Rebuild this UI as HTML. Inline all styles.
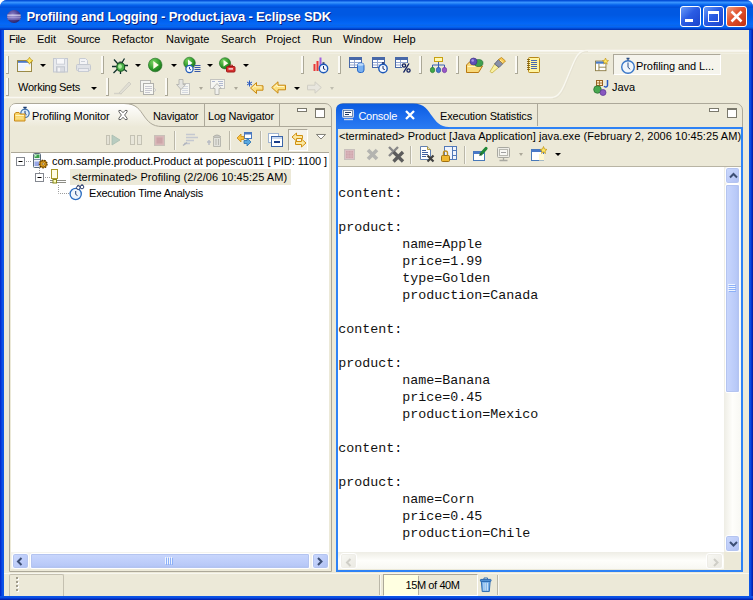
<!DOCTYPE html>
<html><head><meta charset="utf-8"><title>Profiling and Logging - Product.java - Eclipse SDK</title>
<style>
*{box-sizing:border-box;margin:0;padding:0}
html,body{width:753px;height:600px;overflow:hidden;background:#fff}
body{font-family:"Liberation Sans",sans-serif;font-size:11px;color:#000;position:relative}
.a{position:absolute}
svg{position:absolute;overflow:visible}
#win{position:absolute;left:0;top:0;width:753px;height:600px;background:linear-gradient(90deg,#0022C4 0,#0740DF 1.5px,#0C58EA 3px,#0A52E4 4px,#0A52E4 749px,#0C58EA 750px,#0536CE 751.5px,#001C9E 753px);border-radius:7px 7px 0 0;overflow:hidden}
#botb{position:absolute;left:0;top:596px;width:753px;height:4px;background:linear-gradient(#0A52E4,#0C56E8 30%,#0536CE 65%,#001C9E)}
#title{position:absolute;left:0;top:0;width:753px;height:30px;
 background:linear-gradient(#0046D2 0,#0A5AE0 1px,#3C96FF 2.200px,#2A88F8 3.200px,#0A66EE 4.800px,#0058E6 6px,#0050D8 7.500px,#0058E2 8.500px,#0058E2 15px,#0060EE 20px,#0468F8 24px,#0A66E8 25.300px,#0466F6 26.500px,#0458E0 28px,#0038C0 29.200px,#0030B0 30px)}
#ttext{position:absolute;left:26.500px;top:9.400px;color:#fff;font-weight:bold;font-size:13px;letter-spacing:-0.15px;text-shadow:1px 1px 0 #0A1F80;white-space:nowrap}
#client{position:absolute;left:4px;top:30px;width:745px;height:566px;background:#ECE9D8}
.t{position:absolute;white-space:nowrap;line-height:13px}
.grip{position:absolute;width:3px;height:18px;border-right:1px solid #ABA897;border-bottom:1px solid #ABA897;background:#FBFAF5}
.sep{position:absolute;width:2px;height:18px;border-left:1px solid #BAB7A8;border-right:1px solid #F8F7F1}
.dd{position:absolute;width:0;height:0;border-left:3px solid transparent;border-right:3px solid transparent;border-top:3px solid #000}
.dd.dis{border-top-color:#ACA899}
.wb{position:absolute;top:6px;width:21px;height:21px;border:1px solid #fff;border-radius:3px}
.sbb{width:17px;height:17px;border:1px solid #fff;border-radius:3px;background:linear-gradient(135deg,#CBD9FD,#BCCBF8 60%,#ADBEF2);box-shadow:0 0 0 1px #B4C4F0 inset}
.sbd{width:17px;height:17px;border:1px solid #fff;border-radius:3px;background:linear-gradient(135deg,#F8F8F4,#F0EFE9 60%,#EAE9E2);box-shadow:0 0 0 1px #EEEDE7 inset}
.mono{font-family:"Liberation Mono",monospace;font-size:13.33px;white-space:pre;position:absolute;left:338.300px;line-height:20px;height:17px;color:#111}
</style></head><body>
<div id="win">
<div id="title">
 <svg style="left:7px;top:10px" width="14" height="13" viewBox="0 0 14 13"><defs><radialGradient id="eg" cx="0.4" cy="0.35" r="0.7"><stop offset="0" stop-color="#8A80C8"/><stop offset="0.6" stop-color="#4A3F90"/><stop offset="1" stop-color="#2A2060"/></radialGradient></defs><ellipse cx="7" cy="6.5" rx="7" ry="6.5" fill="url(#eg)"/><rect x="0.3" y="4.6" width="13.4" height="1.1" fill="#E8E4F8"/><rect x="0.2" y="6.6" width="13.6" height="1" fill="#C8C0F0"/><rect x="0.6" y="8.5" width="12.8" height="0.9" fill="#A8A0E0"/></svg>
 <div id="ttext">Profiling and Logging - Product.java - Eclipse SDK</div>
 <div class="wb" style="left:680px;background:linear-gradient(135deg,#6A9CF8,#2A5CE4 45%,#1A44CC)"><div class="a" style="left:4px;top:12px;width:8px;height:3px;background:#fff"></div></div>
 <div class="wb" style="left:703px;background:linear-gradient(135deg,#6A9CF8,#2A5CE4 45%,#1A44CC)"><div class="a" style="left:4px;top:4px;width:11px;height:11px;border:1px solid #fff;border-top:3px solid #fff"></div></div>
 <div class="wb" style="left:726px;background:linear-gradient(135deg,#F0A080,#E0502C 45%,#C03010)"><svg style="left:0;top:0" width="19" height="19"><path d="M4.500 4.500L14.500 14.500M14.500 4.500L4.500 14.500" stroke="#fff" stroke-width="2.500"/></svg></div>
</div>
<div id="client"></div>
<div id="botb"></div>
</div>

<!-- ===== MENU BAR ===== -->
<div id="menubar">
 <div class="t" style="left:9px;top:33px;letter-spacing:-0.300px">File</div>
 <div class="t" style="left:37px;top:33px">Edit</div>
 <div class="t" style="left:67px;top:33px;letter-spacing:-0.300px">Source</div>
 <div class="t" style="left:112px;top:33px">Refactor</div>
 <div class="t" style="left:166px;top:33px">Navigate</div>
 <div class="t" style="left:221px;top:33px">Search</div>
 <div class="t" style="left:266px;top:33px">Project</div>
 <div class="t" style="left:312px;top:33px">Run</div>
 <div class="t" style="left:343px;top:33px">Window</div>
 <div class="t" style="left:393px;top:33px">Help</div>
 <div class="a" style="left:4px;top:50px;width:745px;height:1px;background:#FCFBF7"></div>
 <div class="a" style="left:4px;top:51px;width:745px;height:1px;background:#F5F3EA"></div>
 <div class="a" style="left:4px;top:53px;width:745px;height:1px;background:#F1EFE2"></div>
</div>

<!-- ===== TOOLBAR ===== -->
<div id="toolbar">
 <!-- row 1 -->
 <div class="grip" style="left:6px;top:56px"></div>
 <!-- new -->
 <svg style="left:16.500px;top:56.500px" width="16" height="16" viewBox="0 0 16 16"><rect x="0.500" y="3.500" width="14" height="11" fill="#fff" stroke="#9A8A48"/><rect x="1" y="4" width="13" height="1.800" fill="#4A78C8"/><path d="M1,6.500h13v7.500h-13z" fill="#EEF4FE"/><path d="M8,9.500h6v4.500h-6z" fill="#FFF8D8"/><path d="M12.500,0.300l1.300,2.200l2.200,1.200l-2.200,1.300l-1.300,2.200l-1.300,-2.200l-2.200,-1.300l2.200,-1.200z" fill="#FFE860" stroke="#B89010" stroke-width="0.700"/></svg>
 <div class="dd" style="left:40px;top:64px"></div>
 <!-- save (disabled) -->
 <svg style="left:53px;top:57.500px" width="16" height="15.500" viewBox="0 0 16 15" preserveAspectRatio="none"><rect x="0.500" y="0.500" width="14" height="13" fill="#E8EAEE" stroke="#C4C8D0"/><rect x="3.500" y="0.500" width="8" height="5.500" fill="#F8F8FA" stroke="#CCD0D8"/><rect x="3.500" y="8.500" width="8" height="5" fill="#DADCE2" stroke="#C4C8D0"/><rect x="5" y="9.500" width="2" height="3.500" fill="#F4F4F6"/></svg>
 <!-- print (disabled) -->
 <svg style="left:76px;top:58px" width="16" height="15" viewBox="0 0 16 15"><path d="M3.500,0.500h6l2,2v4h-8z" fill="#F4F4F6" stroke="#C8CCD4"/><rect x="0.500" y="6.500" width="14" height="6" rx="1" fill="#E0E2E6" stroke="#C4C8D0"/><rect x="2.500" y="10.500" width="10" height="3" fill="#ECECF0" stroke="#C8CCD4"/><path d="M5,3.500h4" stroke="#CCD0D8"/></svg>
 <div class="grip" style="left:101px;top:56px"></div>
 <!-- debug (bug) -->
 <svg style="left:112px;top:57.500px" width="16" height="16" viewBox="0 0 16 16"><path d="M2,1.500l4,4.500M12.500,0.500l-3,5M0,8.500h4.500M1.500,15l4,-4M8.500,16v-3.500M15,13.500l-3.500,-2.500M16,7.500h-4" stroke="#10302C" stroke-width="1.300" fill="none"/><ellipse cx="8.700" cy="9" rx="4" ry="4.300" fill="#48B048" stroke="#185820" stroke-width="1.100"/><ellipse cx="8" cy="8.500" rx="1.900" ry="2.200" fill="#B0ECA0"/><path d="M6,4.800a2.700,2.200 0 0 1 5,0z" fill="#203830"/></svg>
 <div class="dd" style="left:135px;top:64px"></div>
 <!-- run -->
 <svg style="left:148px;top:58px" width="15" height="15" viewBox="0 0 15 15"><defs><radialGradient id="rg" cx="0.350" cy="0.300" r="0.800"><stop offset="0" stop-color="#78D060"/><stop offset="0.600" stop-color="#2E9A2A"/><stop offset="1" stop-color="#1A6A1C"/></radialGradient></defs><circle cx="7.200" cy="7" r="6.800" fill="url(#rg)" stroke="#1C6A20" stroke-width="0.600"/><path d="M5.300,3L10.800,7L5.300,11z" fill="#FFFCE8"/></svg>
 <div class="dd" style="left:171px;top:64px"></div>
 <!-- profile -->
 <svg style="left:183px;top:57px" width="18" height="17" viewBox="0 0 18 17"><circle cx="6.500" cy="6" r="5.800" fill="url(#rg)" stroke="#1C6A20" stroke-width="0.600"/><path d="M5,2.500L9.500,6L5,9.500z" fill="#fff"/><circle cx="6.500" cy="12" r="3.600" fill="#F4F8FF" stroke="#1C58B8" stroke-width="1.200"/><path d="M6.500,10v2l1.500,1" stroke="#1C3C88" fill="none" stroke-width="0.900"/><path d="M11.500,8.500h6M11.500,10.500h6M11.500,12.500h6M11.500,14.500h6" stroke="#3858A8" stroke-width="1"/></svg>
 <div class="dd" style="left:207px;top:64px"></div>
 <!-- external tools -->
 <svg style="left:219px;top:57px" width="17" height="17" viewBox="0 0 17 17"><circle cx="6" cy="6.300" r="5.600" fill="url(#rg)" stroke="#1C6A20" stroke-width="0.600"/><path d="M4.500,3L9.300,6.300L4.500,9.600z" fill="#FFFCE8"/><rect x="7.500" y="9.500" width="8.500" height="5.500" rx="1" fill="#D83030" stroke="#A01818"/><path d="M10,9.500v-1.300h3.500v1.300" fill="none" stroke="#A01818"/><rect x="9.500" y="11.300" width="4.500" height="1.200" fill="#fff"/></svg>
 <div class="dd" style="left:243px;top:64px"></div>
 <div class="grip" style="left:301px;top:56px"></div>
 <!-- bars + clock -->
 <svg style="left:313px;top:57px" width="16" height="17" viewBox="0 0 16 17"><rect x="0.500" y="7" width="2" height="7" fill="#E83838"/><rect x="3.500" y="4" width="2" height="10" fill="#E83838"/><rect x="6.500" y="0.500" width="2" height="13" fill="#A060E0"/><circle cx="10.500" cy="11.500" r="4.200" fill="#F4F8FF" stroke="#1C58B8" stroke-width="1.400"/><path d="M10.500,9v2.800l1.800,0.800" stroke="#102868" fill="none"/><path d="M9.500,6h2" stroke="#102868" stroke-width="1.400"/></svg>
 <div class="grip" style="left:338px;top:56px"></div>
 <!-- table + cylinder -->
 <svg style="left:349px;top:57px" width="16" height="17" viewBox="0 0 16 17"><rect x="0.500" y="0.500" width="12" height="10" fill="#fff" stroke="#4868A8"/><rect x="0.500" y="0.500" width="12" height="2.500" fill="#4868A8"/><path d="M1,5.500h11M1,8h11M5.500,3v7" stroke="#90A4D0"/><rect x="8.500" y="6" width="6.500" height="9.500" rx="2.500" fill="#78B0F0" stroke="#2868C8"/><ellipse cx="11.750" cy="7.500" rx="3" ry="1.300" fill="#C0DCFC"/></svg>
 <!-- table + clock -->
 <svg style="left:372px;top:57px" width="16" height="17" viewBox="0 0 16 17"><rect x="0.500" y="0.500" width="12" height="10" fill="#fff" stroke="#4868A8"/><rect x="0.500" y="0.500" width="12" height="2.500" fill="#4868A8"/><path d="M1,5.500h11M1,8h11M5.500,3v7" stroke="#90A4D0"/><circle cx="11" cy="11.500" r="4.200" fill="#F4F8FF" stroke="#1C58B8" stroke-width="1.400"/><path d="M11,9v2.800l1.800,0.800" stroke="#102868" fill="none"/><path d="M10,6h2" stroke="#102868" stroke-width="1.400"/></svg>
 <!-- table + % -->
 <svg style="left:395px;top:57px" width="16" height="17" viewBox="0 0 16 17"><rect x="0.500" y="0.500" width="12" height="10" fill="#fff" stroke="#4868A8"/><rect x="0.500" y="0.500" width="12" height="2.500" fill="#4868A8"/><path d="M1,5.500h11M1,8h11M5.500,3v7" stroke="#90A4D0"/><rect x="7" y="6" width="9" height="10" fill="#ECE9D8"/><circle cx="9" cy="8.500" r="1.600" fill="none" stroke="#102060" stroke-width="1.300"/><circle cx="13.500" cy="13.500" r="1.600" fill="none" stroke="#102060" stroke-width="1.300"/><path d="M14,6.500L8.500,15.500" stroke="#102060" stroke-width="1.400"/></svg>
 <div class="grip" style="left:419px;top:56px"></div>
 <!-- hierarchy -->
 <svg style="left:430px;top:57px" width="17" height="17" viewBox="0 0 17 17"><rect x="4.500" y="0.500" width="8" height="4" fill="#FFF8B0" stroke="#C8A010"/><path d="M8.500,5v3M2.500,11v-3h12v3M8.500,8v3" stroke="#3860B0" fill="none"/><ellipse cx="2.500" cy="13" rx="2.200" ry="2.700" fill="#40A848" stroke="#207028" stroke-width="0.600"/><ellipse cx="8.500" cy="13" rx="2.200" ry="2.700" fill="#4878D0" stroke="#204898" stroke-width="0.600"/><ellipse cx="14.500" cy="13" rx="2.200" ry="2.700" fill="#9858C8" stroke="#683098" stroke-width="0.600"/></svg>
 <div class="grip" style="left:456px;top:56px"></div>
 <!-- open type -->
 <svg style="left:466px;top:57px" width="18" height="17" viewBox="0 0 18 17"><path d="M0.500,8l3,-3h8l-1,4l6,0l-4,6.500h-12z" fill="#F8D878" stroke="#B87810"/><path d="M1.500,9.500h9" stroke="#FFF4C0"/><ellipse cx="12.500" cy="6" rx="4.500" ry="3.500" fill="#40A050" stroke="#206830" stroke-width="0.600"/><circle cx="7.500" cy="4.500" r="3.500" fill="#6050B8" stroke="#382878" stroke-width="0.600"/><circle cx="6.700" cy="3.500" r="1.300" fill="#A898E8"/></svg>
 <!-- search (flashlight) -->
 <svg style="left:489px;top:57px" width="17" height="17" viewBox="0 0 17 17"><path d="M1,14.500l5,-8l4,3.500l-7,6z" fill="#F8F0A0" stroke="#C8B040" stroke-width="0.800"/><path d="M5.500,7l4,-4.500l4.500,4l-4,4z" fill="#8890A8" stroke="#505870" stroke-width="0.800"/><path d="M9.500,2.500l3,-2l4,3.500l-2.500,2.500z" fill="#F8C850" stroke="#B88010" stroke-width="0.800"/><path d="M11,3l3,2.500" stroke="#FFF0B0"/></svg>
 <div class="grip" style="left:515px;top:56px"></div>
 <!-- notebook -->
 <svg style="left:526px;top:57px" width="15" height="17" viewBox="0 0 15 17"><rect x="2.500" y="0.500" width="11" height="15" rx="1" fill="#FFF4A0" stroke="#B88818"/><path d="M5,3.500h6M5,5.500h6M5,7.500h6M5,9.500h6M5,11.500h6" stroke="#4868B0"/><path d="M1,2.500h3M1,4.500h3M1,6.500h3M1,8.500h3M1,10.500h3M1,12.500h3" stroke="#806010" stroke-width="0.900"/></svg>

 <!-- row 2 -->
 <div class="grip" style="left:6px;top:78px"></div>
 <div class="t" style="left:18px;top:81px;letter-spacing:-0.270px">Working Sets</div>
 <div class="dd" style="left:91px;top:86.500px"></div>
 <div class="grip" style="left:106px;top:78px"></div>
 <!-- disabled pencil -->
 <svg style="left:113px;top:80px" width="19" height="16" viewBox="0 0 19 16"><path d="M1,13.500h8" stroke="#D4D2C8" stroke-width="1.400"/><path d="M6,13l10,-11l2,2l-10,10z" fill="#E0DED4" stroke="#CCCAC0" stroke-width="0.800"/></svg>
 <!-- disabled doc -->
 <svg style="left:140px;top:80px" width="17" height="16" viewBox="0 0 17 16"><rect x="0.500" y="0.500" width="10" height="11" fill="#F4F4F0" stroke="#B8B8B4"/><rect x="3.500" y="3.500" width="10" height="11" fill="#F8F8F4" stroke="#B0B0AC"/><path d="M5,6.500h7M5,8.500h7M5,10.500h7M5,12.500h5" stroke="#C8C8D0"/><path d="M14,8l2,2l-2,2" fill="none" stroke="#D0D0D0"/></svg>
 <div class="grip" style="left:165px;top:78px"></div>
 <!-- next annotation (disabled) -->
 <svg style="left:176px;top:79px" width="15" height="17" viewBox="0 0 15 17"><rect x="4.500" y="4.500" width="9" height="11" fill="#F6F6F2" stroke="#C4C4C0"/><path d="M6,7.500h6M6,9.500h6M6,11.500h6M6,13.500h6" stroke="#D4D8E0"/><path d="M3,0.500h4v5h2.500l-4.500,5l-4.500,-5h2.500z" fill="#E4E4E0" stroke="#B4B4B0" stroke-width="0.900"/></svg>
 <div class="dd dis" style="left:199px;top:86.500px;border-left-width:2.500px;border-right-width:2.500px"></div>
 <!-- prev annotation (disabled) -->
 <svg style="left:210px;top:79px" width="16" height="17" viewBox="0 0 16 17"><rect x="0.500" y="0.500" width="14" height="9" fill="#F6F6F2" stroke="#C4C4C0"/><path d="M2,2.500h3M8,2.500h5M9,4.500h4M9,6.500h4" stroke="#B0B8D0"/><path d="M5,15.500h4v-6h2.500l-4.500,-5l-4.500,5h2.500z" fill="#F0F0EC" stroke="#B4B4B0" stroke-width="0.900"/></svg>
 <div class="dd dis" style="left:234px;top:86.500px;border-left-width:2.500px;border-right-width:2.500px"></div>
 <!-- last edit location -->
 <svg style="left:247px;top:80px" width="17" height="15" viewBox="0 0 17 15"><path d="M3.500,8l6,-5.500v3.300h6.500v4.400h-6.500v3.300z" fill="#FCE080" stroke="#C88810" stroke-width="1"/><path d="M5.500,8l3,-2.700v1.500h6" fill="none" stroke="#FFF8D0" stroke-width="0.900"/><path d="M2.500,0.500v6M0,2l5,3M0,5l5,-3" stroke="#2858C0" stroke-width="1"/></svg>
 <!-- back -->
 <svg style="left:271px;top:81px" width="15" height="13" viewBox="0 0 15 13"><path d="M0.700,6.500l6.300,-5.700v3.400h7.500v4.600h-7.500v3.400z" fill="#FCE080" stroke="#C88810" stroke-width="1"/><path d="M3,6.500l3,-2.700v1.700h7" fill="none" stroke="#FFF8D0" stroke-width="0.900"/></svg>
 <div class="dd" style="left:294px;top:86.500px"></div>
 <!-- forward disabled -->
 <svg style="left:307px;top:81px" width="15" height="13" viewBox="0 0 15 13"><path d="M14.300,6.500l-6.300,-5.700v3.400h-7.500v4.600h7.500v3.400z" fill="#E8E6DE" stroke="#D0CEC4" stroke-width="1"/></svg>
 <div class="dd dis" style="left:330px;top:86.500px;border-left-width:2.500px;border-right-width:2.500px;border-top-color:#C0BEB0"></div>
</div>

<!-- ===== PERSPECTIVE BAR ===== -->
<div id="persp">
 <svg style="left:0px;top:45px" width="753" height="60" viewBox="0 45 753 60">
  <path d="M4,97.500 L551,97.500 C561,97.500 564.500,84 570,71 S577.500,50.500 587,50.500 L749,50.500" fill="none" stroke="#F9F8F1" stroke-width="1.300"/>
  <path d="M553,98.500 C562,98.500 565.500,85 571,72 S578.500,51.500 588,51.500" fill="none" stroke="#E3E0D0" stroke-width="0.800"/>
 </svg>
 <!-- open perspective -->
 <svg style="left:594.500px;top:57.500px" width="14" height="14" viewBox="0 0 16 16"><rect x="0.500" y="3.500" width="12" height="11" fill="#fff" stroke="#8A7A40"/><rect x="1" y="4" width="11" height="2.500" fill="#4A7CC8"/><path d="M4.500,6.500v8M4.500,10.500h8" stroke="#8A7A40"/><path d="M12,0l1,2.500l2.500,0.500l-2,1.500l0.500,2.500l-2,-1.500l-2,1.500l0.500,-2.500l-2,-1.500l2.500,-0.500z" fill="#FFE860" stroke="#C09010" stroke-width="0.700"/></svg>
 <!-- selected perspective button -->
 <div class="a" style="left:613px;top:54px;width:108px;height:21px;border:1px solid #ACA899;border-right-color:#fff;border-bottom-color:#fff;background:#F5F4EC"></div>
 <svg style="left:620px;top:56.500px" width="16" height="18" viewBox="0 0 16 18"><circle cx="8" cy="10" r="6.300" fill="#F0F6FC" stroke="#3A78C8" stroke-width="1.400"/><path d="M8,5.500v4.800l2.200,2" stroke="#2A4E85" fill="none"/><path d="M6.500,1.500h3M8,1.500v2" stroke="#2A4E85" stroke-width="1.300"/></svg>
 <div class="t" style="left:636px;top:60px;letter-spacing:-0.080px">Profiling and L...</div>
 <!-- java perspective -->
 <svg style="left:593px;top:79px" width="17" height="17" viewBox="0 0 17 17"><rect x="3.500" y="1.500" width="6" height="5" fill="#FFE8C0" stroke="#986020"/><path d="M6.500,1.500v5M3.500,4h6" stroke="#986020" stroke-width="0.800"/><circle cx="4.500" cy="10.500" r="3.800" fill="#48A850" stroke="#206828" stroke-width="0.700"/><circle cx="10" cy="13.500" r="3" fill="#8858C0" stroke="#583090" stroke-width="0.700"/><path d="M14.500,1v5.500a1.800,1.800 0 0 1 -3.400,0.500" fill="none" stroke="#2858C0" stroke-width="1.500"/></svg>
 <div class="t" style="left:612px;top:81px">Java</div>
</div>

<!-- ===== LEFT PANE ===== -->
<div id="left">
 <!-- pane frame -->
 <div class="a" style="left:9px;top:103px;width:323px;height:469px;border:1px solid #ACA899;border-radius:7px 7px 0 0;background:#ECE9D8"></div>
 <!-- selected tab -->
 <svg style="left:0;top:0" width="340" height="160" viewBox="0 0 340 160">
  <defs><linearGradient id="ltab" x1="0" y1="0" x2="0" y2="1"><stop offset="0" stop-color="#fff"/><stop offset="1" stop-color="#ECE9D8"/></linearGradient></defs>
  <path d="M10,127 L10,110 Q10,104 16,104 L124,104 C137,104 140,110.500 144,116 S152,127 162,127 Z" fill="url(#ltab)"/>
  <path d="M124,103.500 C137,103.500 140,110.500 144,116 S152,126.500 162,126.500 L331,126.500" fill="none" stroke="#ACA899" stroke-width="1"/>
  <path d="M204.500,104 V126 M279.500,104 V126" stroke="#ACA899" stroke-width="1"/>
 </svg>
 <!-- tab icon: folder + stopwatch -->
 <svg style="left:14px;top:106px" width="16" height="16" viewBox="0 0 16 16">
  <circle cx="11" cy="7.300" r="4.200" fill="#DCECFA" stroke="#3A70B0" stroke-width="1.200"/><path d="M9.300,1.400h3.400M11,1.400v1.800" stroke="#1C3C70" stroke-width="1.200" fill="none"/><path d="M11,4.800v2.700l1.500,1.200" stroke="#1C3C70" stroke-width="1" fill="none"/>
  <path d="M0.500,8 l1.300,-1.500 h3.200 l1.300,1.500 h4.700 v7 h-10.500z" fill="#F8D468" stroke="#C88818" stroke-width="1"/><path d="M1.500,9.500h8.500" stroke="#FFF4C0" stroke-width="1"/><path d="M2,12h7" stroke="#FCE498" stroke-width="1"/>
 </svg>
 <div class="t" style="left:32px;top:110px;letter-spacing:-0.120px">Profiling Monitor</div>
 <svg style="left:118px;top:109.500px" width="10" height="10" viewBox="0 0 11 11"><path d="M1,0.500 h2.200 l2.300,2.500 l2.300,-2.500 h2.200 v1.500 l-2.700,3.500 l2.700,3.500 v1.500 h-2.200 l-2.300,-2.500 l-2.300,2.500 h-2.200 v-1.500 l2.700,-3.500 l-2.700,-3.500z" fill="#fff" stroke="#444" stroke-width="0.900"/></svg>
 <div class="t" style="left:153px;top:110px;letter-spacing:-0.200px">Navigator</div>
 <div class="t" style="left:208px;top:110px;letter-spacing:-0.200px">Log Navigator</div>
 <!-- min / max -->
 <div class="a" style="left:297px;top:108px;width:10px;height:4px;border:1px solid #7A786C;background:#fff"></div>
 <div class="a" style="left:315px;top:108px;width:10px;height:10px;border:1px solid #7A786C;border-top-width:2px;background:#fff"></div>

 <!-- view toolbar -->
 <svg style="left:106px;top:133px" width="16" height="14" viewBox="0 0 16 14"><rect x="0.500" y="2.500" width="3" height="9" fill="#E4E2D6" stroke="#C4C2B4"/><path d="M6,2 L14,7 L6,12z" fill="#B8CCC0" stroke="#A8BCB0" stroke-width="0.800"/></svg>
 <svg style="left:130px;top:133px" width="13" height="14" viewBox="0 0 13 14"><rect x="0.500" y="2.500" width="4" height="9" fill="#E8E6DA" stroke="#C4C2B4"/><rect x="7.500" y="2.500" width="4" height="9" fill="#E8E6DA" stroke="#C4C2B4"/></svg>
 <svg style="left:154px;top:133px" width="12" height="14" viewBox="0 0 12 14"><rect x="0.500" y="2.500" width="10" height="10" fill="#D8B8B8" stroke="#C8C0B8"/><rect x="2.500" y="4.500" width="6" height="6" fill="#CCA4A8"/></svg>
 <div class="sep" style="left:174px;top:131px;height:19px"></div>
 <svg style="left:182px;top:132px" width="17" height="16" viewBox="0 0 17 16"><path d="M4,2.500h9M4,5.500h12M4,8.500h8M2,11.500h6" stroke="#C4C8D0" stroke-width="1.600"/><path d="M1,13.500l4,-3" stroke="#B0B4BC" stroke-width="1.500"/></svg>
 <svg style="left:206px;top:132px" width="16" height="16" viewBox="0 0 16 16"><path d="M7.500,5.500h7v9h-7z" fill="#E0E0DA" stroke="#B8B8B0"/><path d="M7,5 q4,-4 8,0" fill="#C8C8C4" stroke="#B0B0A8"/><path d="M10,7v6M12.500,7v6" stroke="#B8B8B0"/><path d="M1,10 h4 M3,8v5" stroke="#B8BCC4" stroke-width="1.500"/></svg>
 <div class="sep" style="left:229px;top:131px;height:19px"></div>
 <!-- refresh icon -->
 <svg style="left:236px;top:131px" width="17" height="17" viewBox="0 0 17 17"><rect x="8.500" y="1.500" width="7" height="6" fill="#fff" stroke="#4A78C0"/><rect x="8.500" y="1.500" width="7" height="2" fill="#4A78C0"/><path d="M1,7 l4,-4 v2.500 h3 v3 h-3 v2.500z" fill="#F8C040" stroke="#C88A10" stroke-width="0.800"/><path d="M15,11 l-4,4 v-2.500 h-3 v-3 h3 v-2.500z" fill="#58A8E0" stroke="#2A70B0" stroke-width="0.800"/></svg>
 <div class="sep" style="left:260px;top:131px;height:19px"></div>
 <!-- collapse all -->
 <svg style="left:268px;top:133px" width="16" height="15" viewBox="0 0 16 15"><rect x="0.500" y="0.500" width="10" height="9" fill="#fff" stroke="#A0B4D0"/><rect x="3.500" y="3.500" width="11" height="10" fill="#fff" stroke="#3A64A8"/><rect x="4" y="4" width="10" height="2" fill="#C8D8F0"/><path d="M6,9h6" stroke="#1A3C88" stroke-width="2"/></svg>
 <!-- link (toggled) -->
 <div class="a" style="left:288px;top:129px;width:20px;height:22px;border:1px solid #ACA899;border-right-color:#fff;border-bottom-color:#fff;background:#F4F2EA"></div>
 <svg style="left:291px;top:132px" width="16" height="16" viewBox="0 0 16 16"><path d="M1,5 l4.500,-4 v2.500 h6 v3 h-6 v2.500z" fill="#FCE8A0" stroke="#D09010" stroke-width="1"/><path d="M15,11 l-4.500,4 v-2.500 h-6 v-3 h6 v-2.500z" fill="#FCE8A0" stroke="#D09010" stroke-width="1"/></svg>
 <!-- view menu -->
 <svg style="left:316px;top:133.500px" width="10" height="5.500" viewBox="0 0 11 6"><path d="M0.500,0.500 h10 l-5,5z" fill="#fff" stroke="#6A6860" stroke-width="0.900"/></svg>

 <!-- tree -->
 <div class="a" style="left:11px;top:152px;width:318px;height:400px;background:#fff;border-top:1px solid #ACA899"></div>
 <div class="a" style="left:70px;top:169px;width:221px;height:16px;background:#ECE9D8"></div>
 <svg style="left:0;top:0" width="340" height="210" viewBox="0 0 340 210">
  <g stroke="#9C9C9C" stroke-width="1" stroke-dasharray="1,1" fill="none">
   <path d="M26,161.500H32"/><path d="M39.500,168V173"/><path d="M45,177.500H51"/><path d="M58.500,185V193.500H69"/>
  </g>
  <g fill="#fff" stroke="#848890"><rect x="16.500" y="157.500" width="8" height="8"/><rect x="35.500" y="173.500" width="8" height="8"/></g>
  <path d="M18.500,161.500h4M37.500,177.500h4" stroke="#000"/>
 </svg>
 <!-- host/process icon -->
 <svg style="left:32px;top:153px" width="16" height="16" viewBox="0 0 16 16"><rect x="1.500" y="0.500" width="7" height="14" rx="1" fill="#EEF2F8" stroke="#5A6A7A"/><rect x="2.500" y="1.500" width="5" height="3.500" fill="#38A048"/><rect x="3" y="2" width="1.500" height="1.500" fill="#D0F0D0"/><rect x="2.500" y="8.500" width="5" height="4.500" fill="#98A8E8"/><path d="M2,6.500h6" stroke="#8090A8"/><circle cx="11.200" cy="11" r="3.900" fill="#F0A818" stroke="#4A2C00" stroke-width="1.100" stroke-dasharray="1.600,1.100"/><circle cx="11.200" cy="11" r="3" fill="#F4B020" stroke="#6A4000" stroke-width="0.700"/><circle cx="11.200" cy="11" r="1.200" fill="#FFF4D0" stroke="#6A4000" stroke-width="0.700"/></svg>
 <div class="t" style="left:52px;top:155px;letter-spacing:-0.050px">com.sample.product.Product at popescu011 [ PID: 1100 ]</div>
 <!-- agent icon -->
 <svg style="left:50px;top:169px" width="17" height="16" viewBox="0 0 17 16"><rect x="1.500" y="0.500" width="6" height="9" fill="#FFFDE4" stroke="#A89828"/><path d="M0,11.500h16M0,13.500h16" stroke="#808078" stroke-width="0.900"/><rect x="3" y="10.500" width="3.500" height="3.500" fill="#FFFFC0" stroke="#888818"/></svg>
 <div class="t" style="left:72px;top:171px;letter-spacing:0.040px">&lt;terminated&gt; Profiling (2/2/06 10:45:25 AM)</div>
 <!-- exec time analysis icon -->
 <svg style="left:69px;top:184px" width="17" height="17" viewBox="0 0 17 17"><circle cx="6.700" cy="10" r="5.600" fill="#EEF5FC" stroke="#2A6CC0" stroke-width="1.300"/><path d="M6.700,7v3.400l1.800,1.200" stroke="#20407A" fill="none"/><circle cx="9.300" cy="3.700" r="1.800" fill="#fff" stroke="#182C60" stroke-width="0.900"/><circle cx="13" cy="3" r="1.800" fill="#fff" stroke="#182C60" stroke-width="0.900"/><path d="M8,2.200q1,-1.500 2.500,-0.500M11.800,1.500q1,-1.500 2.500,-0.300" stroke="#182C60" fill="none" stroke-width="0.800"/></svg>
 <div class="t" style="left:89px;top:187px;letter-spacing:-0.200px">Execution Time Analysis</div>

 <!-- h scrollbar -->
 <div class="a" style="left:11px;top:552px;width:318px;height:17px;background:#F4F3EE"></div>
 <div class="a sbb" style="left:12px;top:552.500px;height:16px"><svg style="left:2.500px;top:3px" width="8" height="9" viewBox="0 0 8 9"><path d="M5.500,1L2,4.500L5.500,8" fill="none" stroke="#3C4E74" stroke-width="2"/></svg></div>
 <div class="a sbb" style="left:312px;top:552.500px;height:16px"><svg style="left:3.300px;top:3px" width="8" height="9" viewBox="0 0 8 9"><path d="M2,1L5.500,4.500L2,8" fill="none" stroke="#3C4E74" stroke-width="2"/></svg></div>
 <div class="a" style="left:30px;top:552.500px;width:280px;height:16px;border:1px solid #fff;border-radius:2px;background:linear-gradient(#C9D7FC,#C1D0FB 40%,#B7C8F7 85%,#A9BBEF);box-shadow:0 0 0 1px #B4C4F0 inset"></div>
 <svg style="left:165px;top:557px" width="8" height="8" viewBox="0 0 8 8"><path d="M0.500,0v7M2.500,0v7M4.500,0v7M6.500,0v7" stroke="#EEF4FE"/><path d="M1.500,1v7M3.500,1v7M5.500,1v7M7.500,1v7" stroke="#8CB0F8"/></svg>
</div>

<!-- ===== RIGHT PANE ===== -->
<div id="right">
 <!-- pane frame -->
 <div class="a" style="left:336px;top:103px;width:407px;height:469px;border:1px solid #ACA899;border-radius:7px 7px 0 0;background:#ECE9D8"></div>
 <!-- blue active border -->
 <div class="a" style="left:336px;top:127px;width:407px;height:445px;border:2px solid #2E82F5;border-top-width:2px;background:#ECE9D8"></div>
 <svg style="left:330px;top:96px" width="420" height="40" viewBox="330 96 420 40">
  <defs><linearGradient id="rtab" x1="0" y1="0" x2="0" y2="1"><stop offset="0" stop-color="#0A5BE0"/><stop offset="0.500" stop-color="#1C6CEC"/><stop offset="1" stop-color="#2B7CF2"/></linearGradient></defs>
  <path d="M336,129 L336,110 Q336,103.500 343,103.500 L413,103.500 C425,103.500 428,110.500 432,116 S440,127 449,127 L449,129 Z" fill="url(#rtab)"/>
  <path d="M537.500,104 V126" stroke="#ACA899" stroke-width="1"/>
 </svg>
 <!-- console icon -->
 <svg style="left:342px;top:109px" width="13" height="12" viewBox="0 0 13 12"><rect x="0.500" y="0.500" width="11" height="8" rx="1" fill="#E8EEF8" stroke="#C8D4E8"/><rect x="1.500" y="1.500" width="9" height="6" fill="#fff" stroke="#5070A0" stroke-width="0.800"/><path d="M3,3.500h6M3,5.500h4" stroke="#203860"/><path d="M2,10.500h9" stroke="#D0D8E8" stroke-width="1.400"/></svg>
 <div class="t" style="left:358.400px;top:110px;color:#fff;letter-spacing:-0.250px">Console</div>
 <svg style="left:405px;top:110px" width="10" height="10" viewBox="0 0 10 10"><path d="M1,1L9,9M9,1L1,9" stroke="#fff" stroke-width="2.300"/></svg>
 <div class="t" style="left:440px;top:110px;letter-spacing:-0.170px">Execution Statistics</div>
 <div class="a" style="left:709px;top:108px;width:10px;height:4px;border:1px solid #7A786C;background:#fff"></div>
 <div class="a" style="left:727px;top:108px;width:10px;height:10px;border:1px solid #7A786C;border-top-width:2px;background:#fff"></div>

 <div class="t" style="left:339px;top:130px;letter-spacing:0.060px">&lt;terminated&gt; Product [Java Application] java.exe (February 2, 2006 10:45:25 AM)</div>

 <!-- console toolbar -->
 <svg style="left:344px;top:148.500px" width="11" height="11" viewBox="0 0 11 11"><rect x="0.500" y="0.500" width="10" height="10" fill="#DCC0C4" stroke="#C8C0BC"/><rect x="2" y="2" width="7" height="7" fill="#D0A4AC"/><path d="M4,1v9M7,1v9M1,4h9M1,7h9" stroke="#DCC0C4" stroke-width="0.600"/></svg>
 <svg style="left:366px;top:147.500px" width="13" height="13" viewBox="0 0 13 13"><path d="M2,2L11,11M11,2L2,11" stroke="#B4B4B0" stroke-width="3.600"/></svg>
 <svg style="left:388px;top:146px" width="17" height="17" viewBox="0 0 17 17"><path d="M1,1L10,10M10,1L1,10" stroke="#888" stroke-width="2.400"/><path d="M5.500,6L15,15.500M15,6L5.500,15.500" stroke="#5C5C5C" stroke-width="3.300"/></svg>
 <div class="sep" style="left:410px;top:146px;height:18px"></div>
 <svg style="left:419px;top:146px" width="16" height="17" viewBox="0 0 16 17"><path d="M1.500,0.500h7l3,3v10h-10z" fill="#fff" stroke="#6080B0"/><path d="M8.500,0.500v3h3" fill="#F8E8A0" stroke="#B09840"/><path d="M3,4.500h4M3,6.500h6M3,8.500h6M3,10.500h4" stroke="#4060A0"/><path d="M8.500,9.500L14.500,15.500M14.500,9.500L8.500,15.500" stroke="#404040" stroke-width="2.200"/></svg>
 <svg style="left:441px;top:146px" width="17" height="17" viewBox="0 0 17 17"><rect x="3.500" y="0.500" width="12" height="13" fill="#F0F4FC" stroke="#5078B8"/><path d="M11.500,0.500v13M11.500,4.500h4M11.500,9.500h4" stroke="#5078B8"/><rect x="0.500" y="9.500" width="8" height="6" rx="1" fill="#F0B830" stroke="#A07010"/><path d="M2.500,9.500v-2.500a2,2 0 0 1 4,0v2.500" fill="none" stroke="#C09020" stroke-width="1.400"/></svg>
 <div class="sep" style="left:464px;top:146px;height:18px"></div>
 <svg style="left:473px;top:146px" width="16" height="17" viewBox="0 0 16 17"><rect x="0.500" y="5.500" width="11" height="9" fill="#fff" stroke="#4878B8"/><rect x="0.500" y="5.500" width="11" height="2.500" fill="#4878C8"/><path d="M8,8L13,2.500" stroke="#208838" stroke-width="3.200" stroke-linecap="round"/><path d="M6.500,9.500l2,-2" stroke="#303030" stroke-width="1"/></svg>
 <svg style="left:497px;top:147px" width="14" height="15" viewBox="0 0 14 15"><rect x="0.500" y="0.500" width="12" height="10" rx="1" fill="#EEEDE6" stroke="#A8A8A0"/><rect x="2.500" y="2.500" width="8" height="6" fill="#F8F8F4" stroke="#B8B8B0"/><path d="M4,5.500h5" stroke="#A0A0A0"/><path d="M6.500,11v2M2.500,13.500h8" stroke="#A8A8A0" stroke-width="1.300"/></svg>
 <div class="dd dis" style="left:519px;top:153px;border-left-width:2.500px;border-right-width:2.500px"></div>
 <svg style="left:531px;top:146px" width="16" height="16" viewBox="0 0 16 16"><rect x="0.500" y="3.500" width="12" height="11" fill="#fff" stroke="#4878B8"/><rect x="0.500" y="3.500" width="12" height="2.500" fill="#4878C8"/><path d="M8,8h5v6.500h-5z" fill="#FFF8D0"/><path d="M12.500,0.500l1,2.500l2.500,0.500l-2,1.500l0.500,2.500l-2,-1.500l-2,1.500l0.500,-2.500l-2,-1.500l2.500,-0.500z" fill="#FFE860" stroke="#C09010" stroke-width="0.700"/></svg>
 <div class="dd" style="left:555px;top:153px"></div>

 <!-- text area -->
 <div class="a" style="left:338px;top:166px;width:403px;height:386px;background:#fff;border-top:1px solid #B8B4A4"></div>
 <div class="mono" style="top:184px">content:</div>
 <div class="mono" style="top:218px">product:</div>
 <div class="mono" style="top:235px;left:402.300px">name=Apple</div>
 <div class="mono" style="top:252px;left:402.300px">price=1.99</div>
 <div class="mono" style="top:269px;left:402.300px">type=Golden</div>
 <div class="mono" style="top:286px;left:402.300px">production=Canada</div>
 <div class="mono" style="top:320px">content:</div>
 <div class="mono" style="top:354px">product:</div>
 <div class="mono" style="top:371px;left:402.300px">name=Banana</div>
 <div class="mono" style="top:388px;left:402.300px">price=0.45</div>
 <div class="mono" style="top:405px;left:402.300px">production=Mexico</div>
 <div class="mono" style="top:439px">content:</div>
 <div class="mono" style="top:473px">product:</div>
 <div class="mono" style="top:490px;left:402.300px">name=Corn</div>
 <div class="mono" style="top:507px;left:402.300px">price=0.45</div>
 <div class="mono" style="top:524px;left:402.300px">production=Chile</div>

 <!-- v scrollbar -->
 <div class="a" style="left:724px;top:167px;width:17px;height:385px;background:linear-gradient(90deg,#EEEDE5,#FEFEFB 50%,#F8F8F3)"></div>
 <div class="a sbb" style="left:725px;top:167px;width:15px"><svg style="left:2.500px;top:3.500px" width="9" height="8" viewBox="0 0 9 8"><path d="M1,5.500L4.500,2L8,5.500" fill="none" stroke="#3C4E74" stroke-width="2"/></svg></div>
 <div class="a sbb" style="left:725px;top:535px;width:15px"><svg style="left:2.500px;top:4px" width="9" height="8" viewBox="0 0 9 8"><path d="M1,2L4.500,5.500L8,2" fill="none" stroke="#3C4E74" stroke-width="2"/></svg></div>
 <div class="a" style="left:725px;top:184px;width:15px;height:209px;border:1px solid #fff;border-radius:2px;background:linear-gradient(90deg,#C9D7FC,#C1D0FB 40%,#B7C8F7 85%,#A9BBEF);box-shadow:0 0 0 1px #B4C4F0 inset"></div>
 <svg style="left:728px;top:284px" width="8" height="8" viewBox="0 0 8 8"><path d="M0,0.500h7M0,2.500h7M0,4.500h7M0,6.500h7" stroke="#EEF4FE"/><path d="M1,1.500h7M1,3.500h7M1,5.500h7M1,7.500h7" stroke="#8CB0F8"/></svg>
 <!-- h scrollbar (disabled) -->
 <div class="a" style="left:338px;top:552px;width:386px;height:17px;background:linear-gradient(#EEEDE5,#FEFEFB 50%,#F8F8F3)"></div>
 <div class="a sbd" style="left:340px;top:552.500px;height:16px"><svg style="left:4px;top:4px" width="8" height="9" viewBox="0 0 8 9"><path d="M5.500,1L2,4.500L5.500,8" fill="none" stroke="#CFCEC7" stroke-width="2"/></svg></div>
 <div class="a sbd" style="left:706px;top:552.500px;height:16px"><svg style="left:5px;top:4px" width="8" height="9" viewBox="0 0 8 9"><path d="M2,1L5.500,4.500L2,8" fill="none" stroke="#CFCEC7" stroke-width="2"/></svg></div>
 <div class="a" style="left:724px;top:552px;width:17px;height:17px;background:#ECE9D8"></div>
</div>

<!-- ===== STATUS BAR ===== -->
<div id="status">
 <div class="a" style="left:4px;top:573px;width:745px;height:1px;background:#F8F7F0"></div>
 <div class="a" style="left:9px;top:574px;width:55px;height:22px;border:1px solid #C4C0B0;border-bottom:none;border-radius:2px 2px 0 0"></div>
 <svg style="left:16px;top:577px" width="4" height="16" viewBox="0 0 4 16"><path d="M1,1h2v2h-2zM1,5h2v2h-2zM1,9h2v2h-2zM1,13h2v2h-2z" fill="#fff"/><path d="M0,0h2v2h-2zM0,4h2v2h-2zM0,8h2v2h-2zM0,12h2v2h-2z" fill="#A09C8C"/></svg>
 <div class="sep" style="left:379px;top:575px;height:20px"></div>
 <div class="a" style="left:383px;top:574px;width:95px;height:22px;border:1px solid #ACA899;border-right-color:#fff;border-bottom-color:#fff;background:linear-gradient(90deg,#FFFFE1 0,#FFFFE1 34px,#ECE9D8 34px)"></div>
 <div class="a" style="left:418px;top:576px;width:1px;height:19px;background:#B8B4A4"></div>
 <div class="t" style="left:405.500px;top:579px;letter-spacing:-0.400px">15M of 40M</div>
 <svg style="left:480px;top:576.500px" width="11.500" height="15.500" viewBox="0 0 13 16" preserveAspectRatio="none"><path d="M1.500,4.500h10l-1,10.500h-8z" fill="#78B0E8" stroke="#2868B0"/><path d="M4.500,6v8M6.500,6v8M8.500,6v8" stroke="#D8ECFC" stroke-width="0.900"/><rect x="0.500" y="2.500" width="12" height="2" rx="0.500" fill="#5898D8" stroke="#2868B0"/><path d="M4.500,2.500v-1.500h4v1.500" fill="none" stroke="#2868B0"/></svg>
 <div class="sep" style="left:497px;top:575px;height:20px"></div>
</div>

</body></html>
